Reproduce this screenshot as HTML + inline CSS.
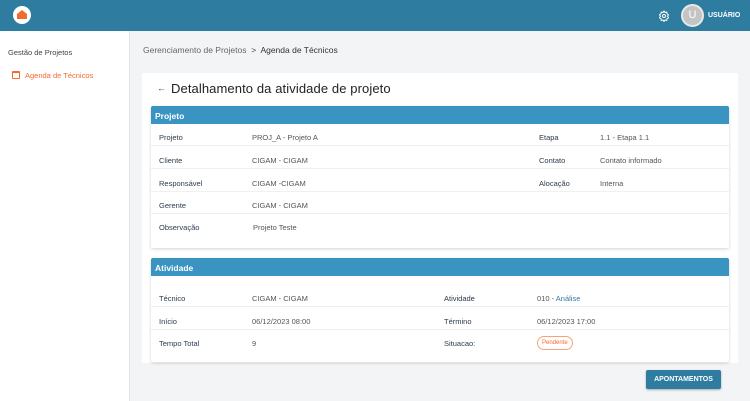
<!DOCTYPE html><html><head><meta charset="utf-8"><style>
*{margin:0;padding:0;box-sizing:border-box}
body{width:750px;height:401px;overflow:hidden;background:#f3f4f6;font-family:"Liberation Sans",sans-serif;position:relative;color:#333}
.a{position:absolute;white-space:nowrap}
.top{left:0;top:0;width:750px;height:31px;background:#2f7ca1}
.side{left:0;top:31px;width:130px;height:370px;background:#fff;border-right:1px solid #e3e3e3}
.card{left:142px;top:73px;width:596px;height:290px;background:#fff}
.sec{left:151px;width:578px;background:#fff;box-shadow:0 1px 3px rgba(0,0,0,.18);border-radius:2px}
.hd{height:18px;background:#3a94c1;color:#fff;font-weight:bold;font-size:8.5px;padding:5px 4px;border-radius:2px 2px 0 0}
.row{position:absolute;left:0;width:578px;height:22px;border-bottom:1.5px solid #eef0f2;font-size:7.5px}
.row span{position:absolute;top:9px}
.l{color:#2b3b4e}.v{color:#555}
</style></head><body>
<div class="a top"></div>
<div class="a" style="left:13px;top:6px;width:18px;height:18px;border-radius:50%;background:#fff"></div>
<div class="a" style="left:17px;top:10px;width:10px;height:9px;background:#f26a2e;clip-path:polygon(50% 0,100% 45%,100% 100%,0 100%,0 45%)"></div>
<svg class="a" style="left:658px;top:10px" width="12" height="12" viewBox="0 0 24 24" fill="none" stroke="#fff" stroke-width="2"><circle cx="12" cy="12" r="3"/><path d="M12 2l2 3 3.5-1 .5 3.5 3 2-2 3 2 3-3 2-.5 3.5-3.5-1-2 3-2-3-3.5 1-.5-3.5-3-2 2-3-2-3 3-2 .5-3.5 3.5 1z"/></svg>
<div class="a" style="left:681px;top:4px;width:23px;height:23px;border-radius:50%;background:#c4c4c4;border:2px solid #e8e8e8;color:#fff;font-size:11px;text-align:center;line-height:19px">U</div>
<div class="a" style="left:708px;top:12px;color:#fff;font-size:7px;font-weight:bold">USUÁRIO</div>
<div class="a side"></div>
<div class="a" style="left:8px;top:48px;font-size:7.5px;color:#444">Gestão de Projetos</div>
<div class="a" style="left:12px;top:71px;width:8px;height:8px;border:1.3px solid #f26a2e;border-radius:1px;border-top-width:2.5px"></div>
<div class="a" style="left:25px;top:71px;font-size:7.5px;color:#f26a2e">Agenda de Técnicos</div>
<div class="a" style="left:143px;top:45px;font-size:8.5px;color:#666">Gerenciamento de Projetos &nbsp;<b style="color:#444;font-weight:normal">&gt;</b>&nbsp; <span style="color:#333">Agenda de Técnicos</span></div>
<div class="a card"></div>
<div class="a" style="left:157px;top:83px;font-size:9px;color:#444">←</div>
<div class="a" style="left:171px;top:81px;font-size:13px;color:#222;letter-spacing:0.1px">Detalhamento da atividade de projeto</div>
<div class="a sec" style="top:106px;height:142px"><div class="hd">Projeto</div>
<div class="row" style="top:18px"><span class="l" style="left:8px">Projeto</span><span class="v" style="left:101px">PROJ_A - Projeto A</span><span class="l" style="left:388px">Etapa</span><span class="v" style="left:449px">1.1 - Etapa 1.1</span></div>
<div class="row" style="top:41px"><span class="l" style="left:8px">Cliente</span><span class="v" style="left:101px">CIGAM - CIGAM</span><span class="l" style="left:388px">Contato</span><span class="v" style="left:449px">Contato informado</span></div>
<div class="row" style="top:64px"><span class="l" style="left:8px">Responsável</span><span class="v" style="left:101px">CIGAM -CIGAM</span><span class="l" style="left:388px">Alocação</span><span class="v" style="left:449px">Interna</span></div>
<div class="row" style="top:86px"><span class="l" style="left:8px">Gerente</span><span class="v" style="left:101px">CIGAM - CIGAM</span></div>
<div class="row" style="top:108px;border:none"><span class="l" style="left:8px">Observação</span><span class="v" style="left:102px">Projeto Teste</span></div>
</div>
<div class="a sec" style="top:258px;height:104px"><div class="hd">Atividade</div>
<div class="row" style="top:27px"><span class="l" style="left:8px">Técnico</span><span class="v" style="left:101px">CIGAM - CIGAM</span><span class="l" style="left:293px">Atividade</span><span class="v" style="left:386px">010 - <span style="position:static;color:#2f7ca1">Análise</span></span></div>
<div class="row" style="top:50px"><span class="l" style="left:8px">Início</span><span class="v" style="left:101px">06/12/2023 08:00</span><span class="l" style="left:293px">Término</span><span class="v" style="left:386px">06/12/2023 17:00</span></div>
<div class="row" style="top:72px;border:none"><span class="l" style="left:8px">Tempo Total</span><span class="v" style="left:101px">9</span><span class="l" style="left:293px">Situacao:</span><span style="left:386px;top:6px;border:1px solid #f4a47a;color:#f26a2e;border-radius:7px;font-size:6px;padding:3px 4px;line-height:6px">Pendente</span></div>
</div>
<div class="a" style="left:646px;top:370px;width:75px;height:19px;background:#2f7ca1;color:#fff;font-size:7px;font-weight:bold;text-align:center;line-height:19px;border-radius:2px;box-shadow:0 1px 2px rgba(0,0,0,.3)">APONTAMENTOS</div>
</body></html>
